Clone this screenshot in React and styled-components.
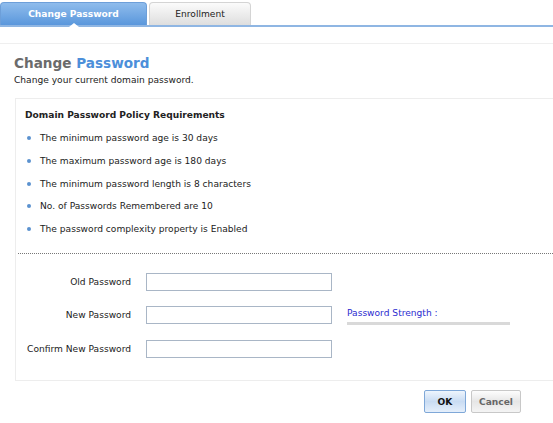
import React from "react";
import styled, { createGlobalStyle } from "styled-components";

const Global = createGlobalStyle`
  html, body { margin: 0; padding: 0; background: #fff; }
  body { font-family: "DejaVu Sans", Verdana, sans-serif; font-size: 9.1px; color: #222; overflow: hidden; }
`;

const Page = styled.div`
  width: 553px;
  height: 423px;
  overflow: hidden;
  padding-top: 2px;
  box-sizing: border-box;
`;

const TabBar = styled.div`
  display: flex;
  gap: 2px;
  height: 23px;
  border-bottom: 2px solid #8fb6e3;
`;

const Tab = styled.div`
  position: relative;
  width: ${(p) => p.$w}px;
  display: flex;
  align-items: center;
  justify-content: center;
  border-radius: 4px 4px 0 0;
  font-size: 9.1px;
  ${(p) =>
    p.$active
      ? `
    background: linear-gradient(#8fbcec, #5a97dc);
    color: #fff;
    font-weight: bold;
    border: 1px solid #6d9fd9;
    border-bottom: none;
    &::after {
      content: "";
      position: absolute;
      left: 50%;
      bottom: -2px;
      margin-left: -5px;
      border-left: 5px solid transparent;
      border-right: 5px solid transparent;
      border-bottom: 4px solid #fff;
    }
  `
      : `
    background: linear-gradient(#fbfbfb, #dedede);
    color: #222;
    border: 1px solid #d4d4d4;
    border-bottom: none;
  `}
`;

const Content = styled.div`
  margin-top: 16px;
  border-top: 1px solid #efefef;
  padding: 10px 0 0 14px;
`;

const Title = styled.h1`
  margin: 0;
  font-size: 13.6px;
  font-weight: bold;
  color: #6b6b6b;
  line-height: 18px;
  span { color: #4c8fda; }
`;

const Subtitle = styled.p`
  margin: 2px 0 0;
  font-size: 9.1px;
  line-height: 13px;
  color: #222;
`;

const Box = styled.div`
  margin-top: 11px;
  margin-left: 1px;
  border: 1px solid #ededed;
  border-right: none;
  height: 283px;
  box-sizing: border-box;
`;

const PolicyTitle = styled.h2`
  margin: 0;
  padding: 10px 0 0 9px;
  font-size: 9.1px;
  font-weight: bold;
  line-height: 13px;
`;

const List = styled.ul`
  margin: 10px 0 0;
  padding: 0 0 0 11px;
  list-style: none;
`;

const Item = styled.li`
  position: relative;
  padding-left: 13px;
  height: 22.75px;
  line-height: 12px;
  &::before {
    content: "";
    position: absolute;
    left: 0;
    top: 4px;
    width: 4px;
    height: 4px;
    border-radius: 50%;
    background: #5b92cf;
  }
`;

const Dotted = styled.div`
  margin: 7px 0 0 2px;
  border-top: 1px dotted #777;
`;

const Form = styled.div`
  display: grid;
  grid-template-columns: 115px 186px auto;
  column-gap: 15px;
  row-gap: 15px;
  margin-top: 19px;
  align-items: center;
`;

const Label = styled.label`
  text-align: right;
  font-size: 9.1px;
`;

const Input = styled.input`
  width: 186px;
  height: 18px;
  box-sizing: border-box;
  border: 1px solid #a9b6c6;
  margin: 0;
  padding: 0 3px;
`;

const Strength = styled.div`
  display: flex;
  flex-direction: column;
  gap: 4px;
  color: #2b2bd0;
  font-size: 9.1px;
  padding-top: 2px;
`;

const Bar = styled.div`
  width: 163px;
  height: 3px;
  background: #d9d9d9;
`;

const Actions = styled.div`
  display: flex;
  justify-content: flex-end;
  gap: 5px;
  padding: 9px 32px 0 0;
`;

const Button = styled.button`
  height: 23px;
  width: ${(p) => p.$w}px;
  font-family: inherit;
  font-size: 9.1px;
  font-weight: bold;
  padding: 0;
  border-radius: 2px;
  ${(p) =>
    p.$primary
      ? `
    border: 1px solid #7fa8d8;
    background: linear-gradient(#eef5fd, #c9dcf3 50%, #e5effb);
    color: #111;
  `
      : `
    border: 1px solid #c8c8c8;
    background: linear-gradient(#fdfdfd, #e6e6e6 50%, #f4f4f4);
    color: #666;
  `}
`;

const rules = [
  "The minimum password age is 30 days",
  "The maximum password age is 180 days",
  "The minimum password length is 8 characters",
  "No. of Passwords Remembered are 10",
  "The password complexity property is Enabled",
];

export default function App() {
  return (
    <Page>
      <Global />
      <TabBar>
        <Tab $active $w={145}>Change Password</Tab>
        <Tab $w={100}>Enrollment</Tab>
      </TabBar>
      <Content>
        <Title>
          Change <span>Password</span>
        </Title>
        <Subtitle>Change your current domain password.</Subtitle>
        <Box>
          <PolicyTitle>Domain Password Policy Requirements</PolicyTitle>
          <List>
            {rules.map((r) => (
              <Item key={r}>{r}</Item>
            ))}
          </List>
          <Dotted />
          <Form>
            <Label>Old Password</Label>
            <Input type="password" />
            <span />
            <Label>New Password</Label>
            <Input type="password" />
            <Strength>
              Password Strength :
              <Bar />
            </Strength>
            <Label>Confirm New Password</Label>
            <Input type="password" />
            <span />
          </Form>
        </Box>
        <Actions>
          <Button $primary $w={42}>OK</Button>
          <Button $w={50}>Cancel</Button>
        </Actions>
      </Content>
    </Page>
  );
}
